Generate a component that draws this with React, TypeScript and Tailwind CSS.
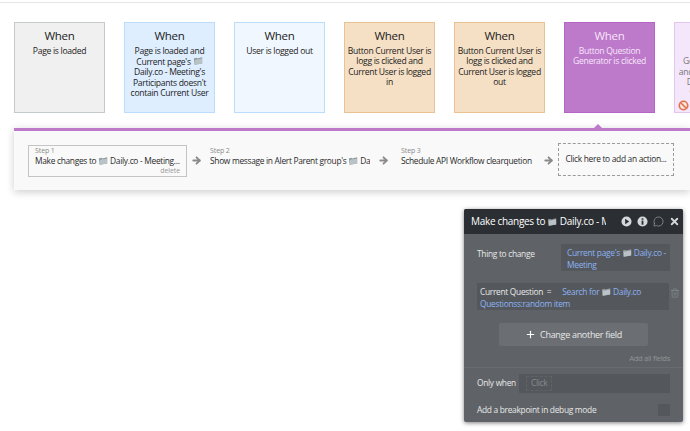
import React from "react";
import { MessageCircle, X, Trash2, Plus, ArrowRight } from "lucide-react";

const Folder = () => (
  <svg viewBox="0 0 12 11" className="inline-block w-[10px] h-[10px] align-[-1.5px]">
    <path d="M1 2.5 L4 1.5 L5 2.5 L11 1 L11 8.5 L2 10 Z" fill="#8f979b" />
    <path d="M2 4 L11 2.5 L11 8.5 L2 10 Z" fill="#b9c2c6" />
  </svg>
);

function Card({ bg, border, text, children }: { bg: string; border: string; text: string; children: React.ReactNode }) {
  return (
    <div className={`w-[91px] h-[91px] flex-none border ${bg} ${border} ${text} text-center pt-[4px] overflow-hidden`}>
      <div className="text-[11.5px] leading-[18px] tracking-[-0.3px]">When</div>
      <div className="text-[8.6px] leading-[10.35px] tracking-[-0.3px] px-[1px] pt-[1px]">{children}</div>
    </div>
  );
}

export default function App() {
  return (
    <div className="relative w-[690px] h-[431px] bg-white overflow-hidden text-[#2a2a2a] font-['Open_Sans',sans-serif]">
      <div className="h-[3px] border-b border-[#e4e4e4]" />
      <div className="flex gap-[19px] pl-[14px] pt-[19px]">
        <Card bg="bg-[#f0f0f0]" border="border-[#c4c9cb]" text="text-[#222]">Page is loaded</Card>
        <Card bg="bg-[#deeeff]" border="border-[#bcdcfb]" text="text-[#222]">
          Page is loaded and Current page's <Folder /> Daily.co - Meeting's Participants doesn't contain Current User
        </Card>
        <Card bg="bg-[#f1f7ff]" border="border-[#bcdcfb]" text="text-[#222]">User is logged out</Card>
        <Card bg="bg-[#f5dfc5]" border="border-[#ebc294]" text="text-[#222]">Button Current User is logg is clicked and Current User is logged in</Card>
        <Card bg="bg-[#f5dfc5]" border="border-[#ebc294]" text="text-[#222]">Button Current User is logg is clicked and Current User is logged out</Card>
        <Card bg="bg-[#bd79ca]" border="border-[#b565c5]" text="text-[#f6e6fa]">Button Question Generator is clicked</Card>
        <Card bg="bg-[#f4e6fb]" border="border-[#e3c6ee]" text="text-[#777]">
          <div className="whitespace-nowrap">Button</div>
          <div className="whitespace-nowrap">Generator is clicked</div>
          <div className="whitespace-nowrap">and Current User isn't</div>
          <div className="whitespace-nowrap">Daily.co - Meeting</div>
          <div className="whitespace-nowrap">Created By User</div>
          <svg viewBox="0 0 12 12" className="w-[11px] h-[11px] mt-[2px] ml-[2px]">
            <circle cx="6" cy="6" r="4.6" fill="#f7e6dc" stroke="#e0714f" strokeWidth="1.8" />
            <path d="M3 3 L9 9" stroke="#e0714f" strokeWidth="1.8" />
          </svg>
        </Card>
      </div>

      <div className="relative ml-[14px] mt-[15px] h-[62px] bg-[#f9f9f9] border-t-[3px] border-[#bd79ca] shadow-[0_2px_8px_rgba(0,0,0,0.2)] flex items-start pl-[14px] pt-[14px] tracking-[-0.3px]">
        <div className="absolute left-[579px] -top-[7px] w-0 h-0 border-x-[5px] border-x-transparent border-b-[5px] border-b-[#bd79ca]" />
        <div className="w-[159px] h-[32px] flex-none border border-[#c4c4c4] px-[6px]">
          <div className="text-[7px] leading-[8px] text-[#8a8a8a] pt-[1px] tracking-[-0.1px]">Step 1</div>
          <div className="text-[8.4px] leading-[11px] whitespace-nowrap">Make changes to <Folder /> Daily.co - Meeting...</div>
          <div className="text-[7px] leading-[9px] text-[#9a9a9a] text-right tracking-[-0.1px]">delete</div>
        </div>
        <div className="w-[18px] flex-none flex justify-center pt-[10px] text-[#8a8a8a]"><ArrowRight size={11} strokeWidth={4} /></div>
        <div className="w-[160px] ml-[5px] flex-none overflow-hidden whitespace-nowrap">
          <div className="text-[7px] leading-[8px] text-[#8a8a8a] pt-[2px] tracking-[-0.1px]">Step 2</div>
          <div className="text-[8.4px] leading-[11px]">Show message in Alert Parent group's <Folder /> Da</div>
        </div>
        <div className="w-[26px] flex-none flex justify-center pt-[10px] text-[#8a8a8a]"><ArrowRight size={11} strokeWidth={4} /></div>
        <div className="w-[132px] ml-[5px] flex-none whitespace-nowrap">
          <div className="text-[7px] leading-[8px] text-[#8a8a8a] pt-[2px] tracking-[-0.1px]">Step 3</div>
          <div className="text-[8.4px] leading-[11px]">Schedule API Workflow clearquetion</div>
        </div>
        <div className="w-[30px] -mr-[5px] flex-none flex justify-center pt-[10px] text-[#8a8a8a]"><ArrowRight size={11} strokeWidth={4} /></div>
        <div className="w-[116px] h-[33px] -mt-[2px] flex-none border border-dashed border-[#9a9a9a] text-[8.4px] flex items-center justify-center">Click here to add an action...</div>
      </div>

      <div className="absolute left-[464px] top-[209px] w-[219px] h-[213px] bg-[#5f6367] rounded-[2px] shadow-[0_1px_4px_rgba(0,0,0,0.5)] text-[#e8e8e8] text-[8.4px] tracking-[-0.3px]">
        <div className="h-[25px] bg-[#2b2f33] flex items-center pl-[7px] rounded-t-[2px] relative">
          <span className="text-[10px] text-white w-[135px] overflow-hidden whitespace-nowrap">Make changes to <Folder /> Daily.co - Meeting</span>
          <div className="absolute left-[157px] top-[7px] flex items-center gap-[5px] text-[#d5d8da]">
            <svg viewBox="0 0 12 12" className="w-[11px] h-[11px]"><circle cx="6" cy="6" r="5.5" fill="#d5d8da" /><path d="M4.5 3 L9 6 L4.5 9 Z" fill="#2b2f33" /></svg>
            <svg viewBox="0 0 12 12" className="w-[11px] h-[11px]"><circle cx="6" cy="6" r="5.5" fill="#d5d8da" /><rect x="5" y="5" width="2" height="4.5" fill="#2b2f33" /><rect x="5" y="2.5" width="2" height="1.6" fill="#2b2f33" /></svg>
            <MessageCircle size={11} strokeWidth={1} />
            <X size={11} strokeWidth={4} />
          </div>
        </div>
        <div className="flex pl-[13px] pt-[10px]">
          <div className="w-[84px] leading-[12px] pt-[4px]">Thing to change</div>
          <div className="w-[109px] h-[27px] bg-[#54585c] text-[#8cb2f3] leading-[12px] pl-[6px] pr-[2px] pt-[3px]">Current page's <Folder /> Daily.co - Meeting</div>
        </div>
        <div className="flex items-start pl-[13px] pt-[12px]">
          <div className="w-[192px] h-[27px] bg-[#54585c] leading-[12px] pl-[3px] pt-[3px]">
            <span>Current Question&nbsp; =</span>
            <span className="text-[#8cb2f3] pl-[11px]">Search for <Folder /> Daily.co Questionss:random item</span>
          </div>
          <Trash2 size={10} className="ml-[1px] mt-[5px] text-[#80858a]" />
        </div>
        <div className="mx-[35px] mt-[13px] h-[23px] bg-[#6b6f73] rounded-[2px] flex items-center justify-center gap-[4px] text-[9px]">
          <Plus size={11} strokeWidth={2.4} className="text-white" />Change another field
        </div>
        <div className="text-right text-[7.6px] text-[#8f9498] pr-[13px] pt-[7px] leading-[10px]">Add all fields</div>
        <div className="border-t border-[#686c70] mt-[4px] flex items-center pl-[13px] pt-[6px]">
          <span className="w-[42px] flex-none">Only when</span>
          <div className="w-[151px] h-[19px] bg-[#54585c] flex items-center pl-[7px]">
            <span className="border border-dashed border-[#5f6367] px-[4px] text-[#868b8f]">Click</span>
          </div>
        </div>
        <div className="flex items-center justify-between px-[13px] pt-[11px]">
          <span>Add a breakpoint in debug mode</span>
          <div className="w-[12px] h-[12px] bg-[#54585c]" />
        </div>
      </div>
    </div>
  );
}
